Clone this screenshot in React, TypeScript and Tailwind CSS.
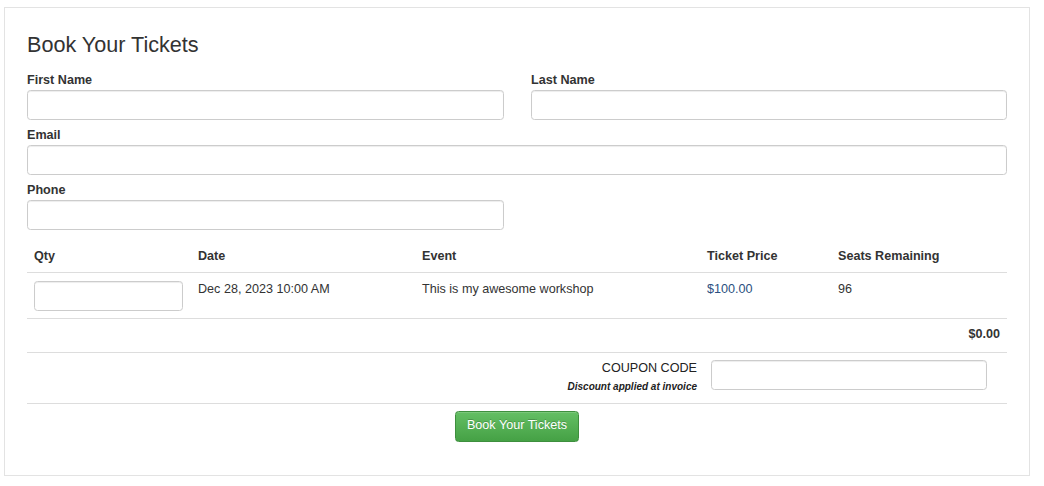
import React, { useState } from "react";

const inputCls =
  "block h-[30px] w-full rounded-[3.5px] border border-[#cccccc] bg-white px-[11px] text-[12.6px] text-[#555] shadow-[inset_0_1px_1px_rgba(0,0,0,0.075)] outline-none";

const Field = ({ label, half }: { label: string; half?: boolean }) => (
  <div className={half ? "w-[477px]" : "w-full"}>
    <label className="mb-[1px] block text-[12.6px] font-bold leading-[18px] text-[#333]">
      {label}
    </label>
    <input type="text" className={inputCls} />
  </div>
);

const App = () => {
  const [qty, setQty] = useState("");

  return (
    <div
      className="min-h-[486px] bg-white pl-[4px] pt-[7px] text-[#333]"
      style={{ fontFamily: '"Liberation Sans", Arial, sans-serif' }}
    >
      <div className="w-[1026px] border border-[#e3e3e3] px-[22px] pb-[33px] pt-[25px]">
        <h3 className="text-[21.6px] font-normal leading-[24px] text-[#333]">
          Book Your Tickets
        </h3>

        <div className="mt-[14px] flex flex-col gap-[6px]">
          <div className="grid grid-cols-[477px_476px] gap-[27px]">
            <Field label="First Name" />
            <Field label="Last Name" />
          </div>
          <Field label="Email" />
          <Field label="Phone" half />
        </div>

        <table className="mt-[10px] w-full table-fixed border-collapse text-[12.6px] leading-[18px]">
          <thead>
            <tr className="border-b border-[#dddddd] text-left">
              <th className="w-[164px] px-[7px] py-[7px] font-bold">Qty</th>
              <th className="w-[224px] px-[7px] py-[7px] font-bold">Date</th>
              <th className="w-[285px] px-[7px] py-[7px] font-bold">Event</th>
              <th className="w-[131px] px-[7px] py-[7px] font-bold">Ticket Price</th>
              <th className="px-[7px] py-[7px] font-bold">Seats Remaining</th>
            </tr>
          </thead>
          <tbody>
            <tr className="border-b border-[#dddddd] align-top">
              <td className="px-[7px] pb-[7px] pt-[8px]">
                <input
                  type="text"
                  value={qty}
                  onChange={(e) => setQty(e.target.value)}
                  className={inputCls + " !w-[149px]"}
                />
              </td>
              <td className="px-[7px] py-[7px]">Dec 28, 2023 10:00 AM</td>
              <td className="px-[7px] py-[7px]">This is my awesome workshop</td>
              <td className="px-[7px] py-[7px] text-[#2b4f80]">$100.00</td>
              <td className="px-[7px] py-[7px]">96</td>
            </tr>
            <tr className="border-b border-[#dddddd]">
              <td colSpan={5} className="px-[7px] pb-[9px] pt-[6px] text-right font-bold">
                $0.00
              </td>
            </tr>
          </tbody>
        </table>

        <div className="flex h-[51px] items-start justify-end border-b border-[#dddddd] pr-[20px] pt-[7px]">
          <div className="text-right">
            <div className="text-[12.6px] leading-[16px] text-[#222]">COUPON CODE</div>
            <div className="mt-[5px] text-[10px] font-bold italic leading-[12px] text-[#222]">
              Discount applied at invoice
            </div>
          </div>
          <input type="text" className={inputCls + " ml-[14px] !w-[276px]"} />
        </div>

        <div className="flex justify-center pt-[7px]">
          <button
            type="button"
            className="h-[31px] w-[124px] rounded-[3.5px] border border-[#3e8f3e] bg-gradient-to-b from-[#64bf64] to-[#45a145] pb-[2px] text-[12.6px] text-white [text-shadow:0_-1px_0_rgba(0,0,0,0.2)] shadow-[inset_0_1px_0_rgba(255,255,255,0.15)]"
          >
            Book Your Tickets
          </button>
        </div>
      </div>
    </div>
  );
};

export default App;
